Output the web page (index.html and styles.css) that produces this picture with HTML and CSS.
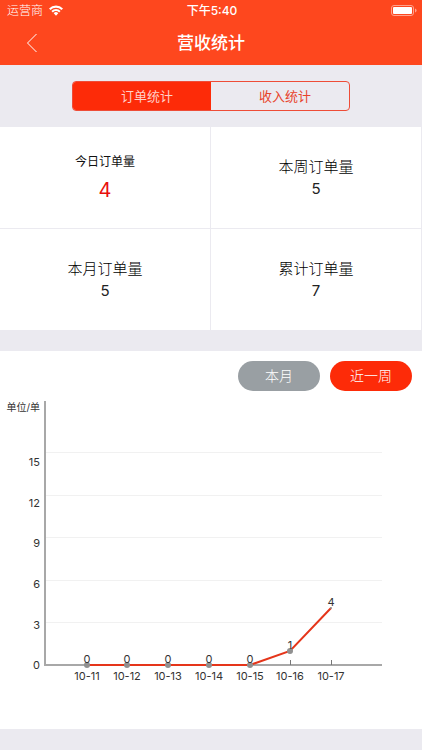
FILE: index.html
```html
<!DOCTYPE html>
<html lang="zh-CN">
<head>
<meta charset="utf-8">
<meta name="viewport" content="width=device-width, initial-scale=1">
<title>营收统计</title>
<link rel="stylesheet" href="styles.css">
</head>
<body>
<header class="header">
  <div class="status">
    <span class="carrier">运营商
      <svg class="wifi" viewBox="0 0 14 11" aria-hidden="true">
        <path d="M0 3.4 A9.8 9.8 0 0 1 14 3.4 L12.5 5 A7.7 7.7 0 0 0 1.5 5 Z M2.4 5.9 A6.5 6.5 0 0 1 11.6 5.9 L10.1 7.4 A4.4 4.4 0 0 0 3.9 7.4 Z M4.7 8.3 A3.2 3.2 0 0 1 9.3 8.3 L7 10.7 Z"/>
      </svg>
    </span>
    <span class="time">下午5:40</span>
    <svg class="battery" viewBox="0 0 26 11" aria-hidden="true">
      <rect class="battery-case" x="0.5" y="0.5" width="22" height="10" rx="2.5"/>
      <rect class="battery-level" x="2" y="2" width="19" height="7" rx="1"/>
      <path class="battery-tip" d="M24 3.5 Q25.6 4 25.6 5.5 T24 7.5 Z"/>
    </svg>
  </div>
  <div class="nav">
    <button class="back" type="button" aria-label="返回">
      <svg viewBox="0 0 12 20" aria-hidden="true"><path d="M10.5 1 L1.5 10 L10.5 19"/></svg>
    </button>
    <h1 class="title">营收统计</h1>
  </div>
</header>

<main>
  <div class="tabs">
    <div class="segmented">
      <button class="segment segment-active" type="button">订单统计</button>
      <button class="segment" type="button">收入统计</button>
    </div>
  </div>

  <section class="stats">
    <div class="stat stat-today"><span class="stat-label">今日订单量</span><span class="stat-value">4</span></div>
    <div class="stat"><span class="stat-label">本周订单量</span><span class="stat-value">5</span></div>
    <div class="stat"><span class="stat-label">本月订单量</span><span class="stat-value">5</span></div>
    <div class="stat"><span class="stat-label">累计订单量</span><span class="stat-value">7</span></div>
  </section>

  <section class="chart-card">
    <div class="ranges">
      <button class="range" type="button">本月</button>
      <button class="range range-active" type="button">近一周</button>
    </div>
    <svg class="chart" viewBox="0 0 422 338" role="img" aria-label="近一周订单量">
      <g class="grid">
        <path d="M46 61.5H382M46 104.5H382M46 146.5H382M46 189.5H382M46 231.5H382"/>
      </g>
      <path class="axis" d="M45 10V274H382"/>
      <path class="tick" d="M290.5 269V274M331.5 269V274"/>
      <polyline class="series" points="87,274 127,274 168,274 209,274 250,274 290,260 331,217"/>
      <g class="points">
        <circle cx="87" cy="274" r="3"/><circle cx="127" cy="274" r="3"/><circle cx="168" cy="274" r="3"/><circle cx="209" cy="274" r="3"/><circle cx="250" cy="274" r="3"/><circle cx="290" cy="260" r="3"/><circle cx="331" cy="217" r="1"/>
      </g>
      <g class="text text-end">
        <text class="unit" x="40" y="20">单位/单</text>
        <text x="40" y="75">15</text>
        <text x="40" y="116">12</text>
        <text x="40" y="156">9</text>
        <text x="40" y="197">6</text>
        <text x="40" y="238">3</text>
        <text x="40" y="278">0</text>
      </g>
      <g class="text text-middle">
        <text x="87" y="272">0</text>
        <text x="127" y="272">0</text>
        <text x="168" y="272">0</text>
        <text x="209" y="272">0</text>
        <text x="250" y="272">0</text>
        <text x="290" y="258">1</text>
        <text x="331" y="215">4</text>
      </g>
      <g class="text text-middle">
        <text x="87" y="289">10-11</text>
        <text x="127" y="289">10-12</text>
        <text x="168" y="289">10-13</text>
        <text x="209" y="289">10-14</text>
        <text x="250" y="289">10-15</text>
        <text x="290" y="289">10-16</text>
        <text x="331" y="289">10-17</text>
      </g>
    </svg>
  </section>
</main>
</body>
</html>
```
FILE: styles.css
```css
* {
  box-sizing: border-box;
}

body {
  margin: 0;
  background: #ebeaf0;
  color: #222;
  font-family: Inter, "Noto Sans CJK SC", sans-serif;
}

button {
  margin: 0;
  padding: 0;
  border: 0;
  background: none;
  font-family: inherit;
}

svg {
  display: block;
}

.header {
  padding-bottom: 4px;
  background: #fe471e;
  color: #fff;
}

.status {
  display: grid;
  grid-template-columns: 1fr auto 1fr;
  align-items: center;
  height: 21px;
  padding: 0 5px 0 7px;
  font-size: 12px;
  line-height: 20px;
}

.carrier {
  display: flex;
  align-items: center;
  gap: 6px;
  font-weight: 300;
}

.wifi {
  width: 14px;
  height: 11px;
  fill: #fff;
}

.time {
  font-weight: 500;
}

.battery {
  justify-self: end;
  width: 26px;
  height: 11px;
}

.battery-case {
  fill: none;
  stroke: #ffa28d;
}

.battery-level {
  fill: #fff;
}

.battery-tip {
  fill: #ffa28d;
}

.nav {
  display: grid;
  grid-template-columns: 1fr auto 1fr;
  align-items: center;
  height: 40px;
  padding-top: 4px;
}

.back {
  justify-self: start;
  padding: 8px 26px;
}

.back svg {
  width: 12px;
  height: 20px;
  fill: none;
  stroke: #fff;
}

.title {
  margin: 0;
  font-size: 17px;
  font-weight: 500;
  line-height: 24px;
}

.tabs {
  padding: 16px 72px;
}

.segmented {
  display: grid;
  grid-template-columns: 1fr 1fr;
  height: 30px;
  overflow: hidden;
  border: 1px solid #ee4c37;
  border-radius: 4px;
}

.segment {
  padding: 0 0 2px 10px;
  color: #e8432b;
  font-size: 13px;
}

.segment-active {
  background: #fd2b08;
  color: #ffd0c8;
}

.stats {
  display: grid;
  grid-template-columns: 1fr 1fr;
  gap: 1px;
  padding-right: 1px;
}

.stat {
  display: flex;
  flex-direction: column;
  align-items: center;
  justify-content: center;
  min-height: 101px;
  padding-top: 1px;
  background: #fff;
}

.stat-label {
  color: #000;
  font-size: 15px;
  font-weight: 300;
  line-height: 22px;
}

.stat-value {
  font-size: 15px;
  line-height: 22px;
}

.stat-today .stat-label {
  color: #111;
  font-size: 12px;
  font-weight: 400;
  line-height: 24px;
}

.stat-today .stat-value {
  color: #e8100c;
  font-size: 20px;
  line-height: 32px;
}

.chart-card {
  margin: 21px 0;
  padding-top: 10px;
  background: #fff;
}

.ranges {
  display: flex;
  justify-content: flex-end;
  gap: 10px;
  padding-right: 10px;
}

.range {
  width: 82px;
  height: 30px;
  padding-bottom: 2px;
  border-radius: 15px;
  background: #999fa3;
  color: #fff;
  font-size: 14px;
  font-weight: 300;
}

.range-active {
  background: #fd2b08;
}

.chart {
  width: 100%;
}

.grid {
  fill: none;
  stroke: #f1f1f1;
}

.axis {
  fill: none;
  stroke: #a8a8a8;
  stroke-width: 2;
}

.tick {
  stroke: #777;
}

.series {
  fill: none;
  stroke: #e5351a;
  stroke-width: 2;
}

.points {
  fill: #909090;
}

.text {
  fill: #333;
  font-size: 11px;
}

.unit {
  font-size: 10px;
}

.text-end {
  text-anchor: end;
}

.text-middle {
  text-anchor: middle;
}
```
